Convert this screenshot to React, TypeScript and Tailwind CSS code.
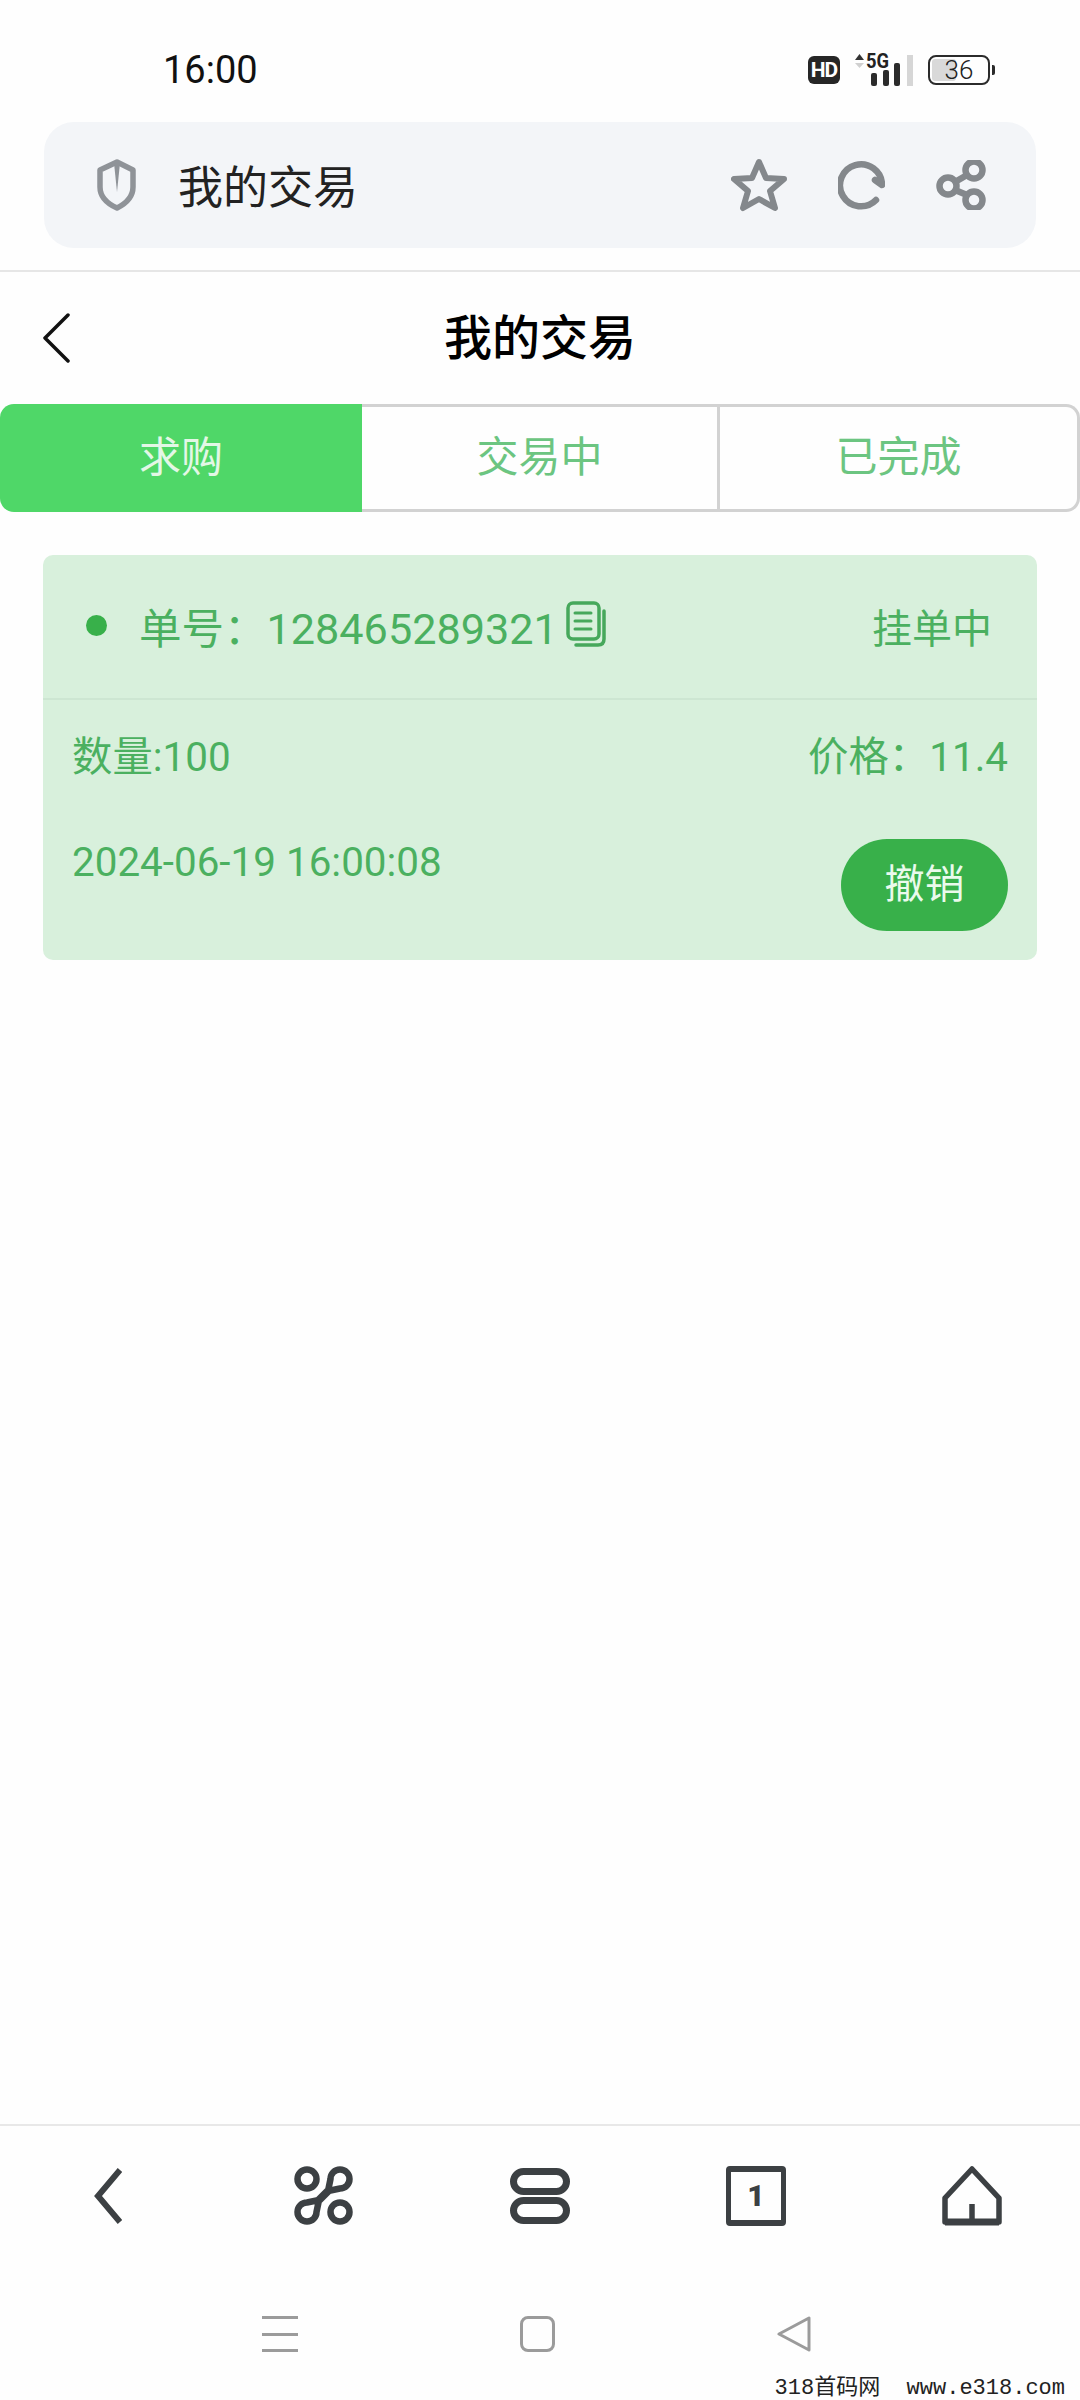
import React from "react";

const SANS = "font-['Roboto','Noto_Sans_CJK_SC',sans-serif]";

function Signal() {
  return (
    <svg width="62" height="46" viewBox="0 -6 62 46" className="block">
      <path d="M3 7 L7.5 1 L12 7 Z" fill="#333" />
      <path d="M3 10 L12 10 L7.5 15 Z" fill="#d0d0d0" />
      <text x="14" y="15" fontFamily="Roboto, sans-serif" fontSize="20" fontWeight="700" fill="#222" textLength="23" lengthAdjust="spacingAndGlyphs">5G</text>
      <rect x="19" y="20" width="6" height="13" rx="2" fill="#2b2b2b" />
      <rect x="31" y="17" width="6" height="16" rx="2" fill="#2b2b2b" />
      <rect x="42" y="10" width="6" height="23" rx="2" fill="#2b2b2b" />
      <rect x="55" y="2" width="6" height="31" fill="#d6d6d6" />
    </svg>
  );
}

function Battery() {
  return (
    <div className="flex items-center gap-[2px]">
      <div className="relative w-[62px] h-[30px] rounded-[8px] border-[2.5px] border-[#2b2b2b] flex items-center justify-center overflow-hidden">
        <div className="absolute left-[2px] top-[2px] bottom-[2px] w-[24px] rounded-[3px] bg-[#d9d9d9]" />
        <span className="relative text-[26px] leading-none font-light text-[#222]">36</span>
      </div>
      <div className="w-[3px] h-[10px] rounded-r-[2px] bg-[#2b2b2b]" />
    </div>
  );
}

function Shield() {
  return (
    <svg width="40" height="52" viewBox="0 0 40 52" fill="none" stroke="#8f9398" strokeWidth="5.5" strokeLinejoin="round">
      <path d="M21 3 L37 11 V28 C37 38 29 45 21 49 C12 45 4 38 4 28 V11 Z" />
      <path d="M18 4 L24 4 L21 33 Z" fill="#8f9398" stroke="none" />
    </svg>
  );
}

function Star() {
  return (
    <svg width="56" height="54" viewBox="0 0 56 54" fill="none" stroke="#84888c" strokeWidth="6" strokeLinejoin="round">
      <path d="M28 4 L35 20 L53 21 L39 33 L44 50 L28 41 L12 50 L17 33 L3 21 L21 20 Z" />
    </svg>
  );
}

function Reload() {
  return (
    <svg width="47" height="50" viewBox="0 0 47 50" fill="none" stroke="#84888c" strokeWidth="6.5" strokeLinecap="round" strokeLinejoin="round">
      <path d="M38 40 A21 21 0 1 1 44 25 L37 20" />
    </svg>
  );
}

function Share() {
  return (
    <svg width="50" height="50" viewBox="0 0 50 50" fill="none" stroke="#84888c" strokeWidth="6.5">
      <circle cx="38" cy="10" r="8.5" />
      <circle cx="12" cy="26" r="8.5" />
      <circle cx="38" cy="40" r="8.5" />
      <path d="M19 22 L31 15 M19 30 L31 35" />
    </svg>
  );
}

function CopyIcon() {
  return (
    <svg width="40" height="46" viewBox="0 0 40 46" fill="none" stroke="#46a85b" strokeLinecap="round" strokeLinejoin="round">
      <rect x="2" y="2" width="31" height="36" rx="5" strokeWidth="3.5" />
      <path d="M9 12 H25 M9 20 H25 M9 28 H25" strokeWidth="3" />
      <path d="M38 10 V38 C38 42 36 44 32 44 H10" strokeWidth="3.5" />
    </svg>
  );
}

function NavBack() {
  return (
    <svg width="28" height="56" viewBox="0 0 28 56" fill="none" stroke="#3c4043" strokeWidth="6" strokeLinejoin="miter">
      <path d="M26 2 L4 28 L26 54" />
    </svg>
  );
}

function Cmd() {
  return (
    <svg width="60" height="60" viewBox="0 0 60 60" fill="none" stroke="#3c4043" strokeWidth="6.5" strokeLinejoin="round">
      <circle cx="13" cy="13" r="9.5" />
      <circle cx="46" cy="46" r="9.5" />
      <path d="M34 25 L36.5 13 A9.5 9.5 0 1 1 46 22.5 Z" />
      <path d="M25 34 L22.5 46 A9.5 9.5 0 1 1 13 36.5 Z" />
      <path d="M34 25 L25 34" strokeWidth="8" />
    </svg>
  );
}

function Pills() {
  return (
    <svg width="60" height="56" viewBox="0 0 60 56" fill="none" stroke="#3c4043" strokeWidth="7">
      <rect x="3.5" y="3.5" width="53" height="20" rx="10" />
      <rect x="3.5" y="32.5" width="53" height="20" rx="10" />
    </svg>
  );
}

function TabBox() {
  return (
    <div className="w-[60px] h-[60px] rounded-[4px] border-x-[5px] border-y-[6px] border-[#3c4043] flex items-center justify-center">
      <span className="text-[30px] leading-none font-black text-[#3c4043]">1</span>
    </div>
  );
}

function Home() {
  return (
    <svg width="60" height="60" viewBox="0 0 60 60" fill="none" stroke="#3c4043" strokeLinejoin="round">
      <path d="M30 3 L57 32 V56 H3 V32 Z" strokeWidth="5.5" />
      <path d="M3 56 H57" strokeWidth="7" />
      <path d="M30 38 V56" strokeWidth="5.5" />
    </svg>
  );
}

function ChevronThin() {
  return (
    <svg width="28" height="50" viewBox="0 0 28 50" fill="none" stroke="#111" strokeWidth="3.5" strokeLinecap="round" strokeLinejoin="round">
      <path d="M26 2 L3 25 L26 48" />
    </svg>
  );
}

export default function App() {
  return (
    <div className={`${SANS} w-[1080px] h-[2400px] bg-[#fefefe] flex flex-col overflow-hidden`}>
      <div className="h-[122px] pt-[50px] pl-[163px] pr-[85px] flex justify-between items-start">
        <span className="text-[38px] leading-[40px] text-[#111]">16:00</span>
        <div className="h-[40px] flex items-center">
          <div className="w-[32px] h-[28px] rounded-[6px] bg-[#262626] text-white text-[21px] tracking-[-1px] font-bold leading-none flex items-center justify-center">HD</div>
          <div className="ml-[12px]"><Signal /></div>
          <div className="ml-[14px]"><Battery /></div>
        </div>
      </div>

      <div className="h-[150px] px-[44px] border-b-2 border-[#e6e6e6]">
        <div className="h-[126px] rounded-[30px] bg-[#f3f5f8] pl-[52px] pr-[50px] flex items-center">
          <Shield />
          <span className="ml-[42px] mt-[6px] text-[45px] leading-none text-[#222]">我的交易</span>
          <div className="ml-auto flex items-center gap-[51px]">
            <Star />
            <Reload />
            <Share />
          </div>
        </div>
      </div>

      <div className="h-[132px] pl-[42px] grid grid-cols-[1fr_auto_1fr] items-center">
        <ChevronThin />
        <span className="text-[48px] leading-none font-medium text-black mt-[2px] pr-[42px]">我的交易</span>
        <span />
      </div>

      <div className="h-[108px] flex text-[42px] leading-none text-[#6cc581]">
        <div className="w-[362px] bg-[#4fd768] rounded-l-[14px] text-[#e3f7e6] flex items-center justify-center">求购</div>
        <div className="w-[358px] border-y-[3px] border-r-[3px] border-[#d2d2d2] flex items-center justify-center">交易中</div>
        <div className="flex-1 border-y-[3px] border-r-[3px] border-[#d2d2d2] rounded-r-[14px] flex items-center justify-center">已完成</div>
      </div>

      <div className="mt-[43px] mx-[43px] h-[405px] rounded-[10px] bg-[#d8f0dc] text-[40.4px] leading-[48px] text-[#4bb060]">
        <div className="h-[145px] border-b-2 border-[#cde6d2] pl-[43px] pr-[45px] flex items-center">
          <div className="w-[21px] h-[21px] rounded-full bg-[#38b04a] -mt-[3px]" />
          <span className="ml-[32px] mt-[6px] text-[42.5px]">单号：<span className="text-[43.2px]">128465289321</span></span>
          <div className="ml-[8px] -mt-[5px]"><CopyIcon /></div>
          <span className="ml-auto mt-[6px] text-[40px]">挂单中</span>
        </div>
        <div className="px-[29px] pt-[34px]">
          <div className="flex justify-between">
            <span>数量:100</span>
            <span>价格：11.4</span>
          </div>
          <div className="mt-[57px] flex justify-between items-start">
            <span>2024-06-19 16:00:08</span>
            <button className="w-[167px] h-[92px] rounded-full bg-[#38b04a] text-[#eafaec] text-[40px] leading-none flex items-center justify-center">撤销</button>
          </div>
        </div>
      </div>

      <div className="mt-auto h-[276px] border-t-2 border-[#e8e8e8] overflow-hidden">
        <div className="pt-[40px] h-[100px] grid grid-cols-5 justify-items-center items-center">
          <NavBack />
          <Cmd />
          <Pills />
          <TabBox />
          <Home />
        </div>
        <div className="mt-[90px] h-[36px] pl-[262px] flex items-center gap-[222px]">
          <div className="w-[36px] h-[36px] flex flex-col justify-between">
            <div className="h-[3px] bg-[#9b9b9b]" />
            <div className="h-[3px] bg-[#9b9b9b]" />
            <div className="h-[3px] bg-[#9b9b9b]" />
          </div>
          <div className="w-[35px] h-[36px] rounded-[8px] border-[3px] border-[#9b9b9b]" />
          <svg width="34" height="36" viewBox="0 0 34 36" fill="none" stroke="#9b9b9b" strokeWidth="3" strokeLinejoin="round">
            <path d="M32 2 V34 L2 18 Z" />
          </svg>
        </div>
        <div className="mt-[25px] pr-[15px] text-right font-['Liberation_Mono','Noto_Sans_CJK_SC',monospace] text-[22px] leading-[23px] text-[#222] whitespace-pre">318首码网  www.e318.com</div>
      </div>
    </div>
  );
}
